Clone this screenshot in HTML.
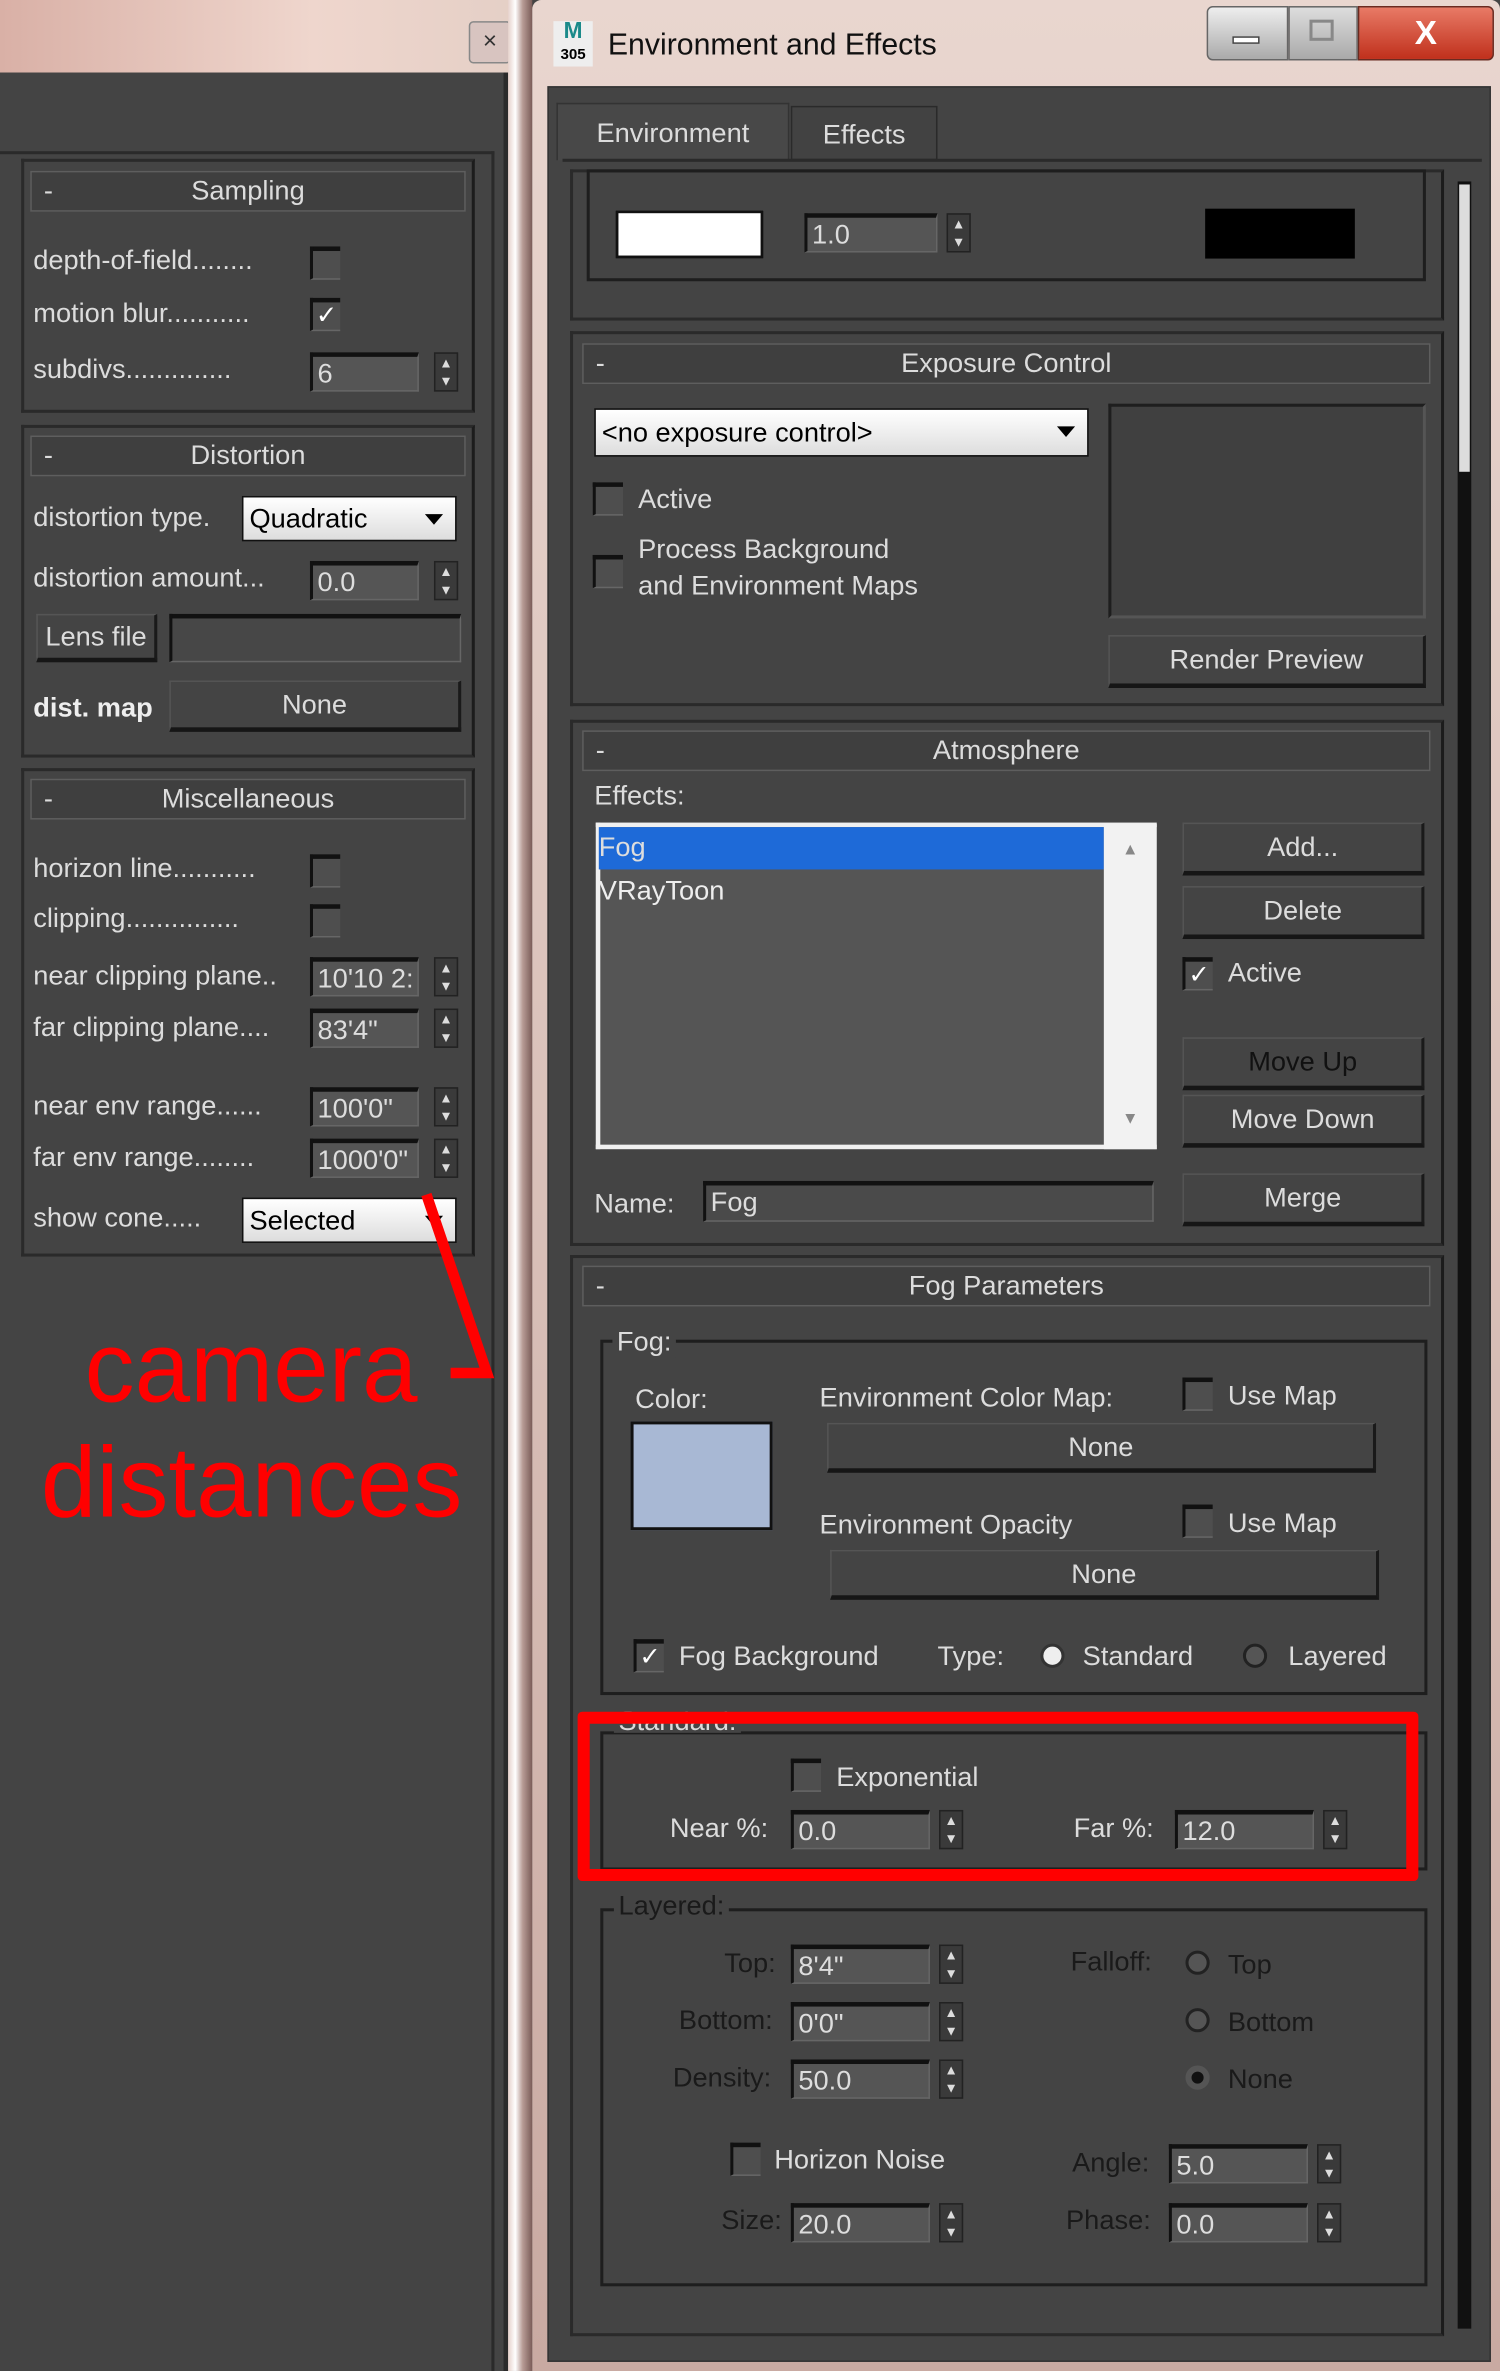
<!DOCTYPE html>
<html><head><meta charset="utf-8"><style>
html,body{margin:0;padding:0;background:#444;width:1500px;height:2371px;overflow:hidden}
#s{position:absolute;left:0;top:0;width:992px;height:1568px;transform:scale(1.5121);transform-origin:0 0;background:#444;font-family:"Liberation Sans",sans-serif;font-size:18px;color:#dcdcdc;overflow:hidden}
#s div{position:absolute;box-sizing:border-box}
.t{line-height:22px;white-space:nowrap}
#s .d{color:#1a1a1a}
.hd{height:27px;border:1px solid #5e5e5e;background:#3f3f3f;text-align:center;line-height:25px}
.hd span{position:absolute;left:8px;top:0}
.fr{border:2px solid #2a2a2a;border-right-color:#1c1c1c}
.grp{border:2px solid #1e1e1e}
.fld{background:#555;border-top:3px solid #111;border-left:2px solid #111;border-bottom:1px solid #666;border-right:1px solid #666;color:#ddd;padding-left:3px;line-height:22px;height:26px}
.sp{width:16px;height:26px;background:#3a3a3a;border:1px solid #222;font-size:9px;line-height:12px;text-align:center;color:#ddd}
.btn{background:#444;border:1px solid #555;border-bottom:3px solid #161616;border-right:2px solid #1a1a1a;text-align:center;line-height:30px}
.cb{width:20px;height:22px;background:#4e4e4e;border-top:3px solid #111;border-left:2px solid #111;border-bottom:1px solid #666;color:#fff;font-size:17px;line-height:18px;text-align:center}
.rd{width:16px;height:16px;border-radius:50%;background:#555;border:2px solid #222}
.dd{background:linear-gradient(#fff,#ddd);border:1px solid #111;color:#000;line-height:28px;padding-left:4px}
.dd:after{content:"";position:absolute;right:8px;top:11px;border:6px solid transparent;border-top:7px solid #000}
</style></head><body><div id="s">
<div style="left:0;top:0;width:345px;height:48px;background:linear-gradient(90deg,#d9b0a6,#efd6cd 60%,#e4cfc6)"></div>
<div style="left:310px;top:14px;width:28px;height:28px;border:1px solid #888;border-radius:3px;background:#d8c4c0;color:#333;text-align:center;line-height:26px;font-size:16px">×</div>
<div style="left:0;top:48px;width:336px;height:1520px;background:#444;border-right:3px solid #2b2b2b"></div>
<div style="left:0;top:100px;width:327px;height:1468px;border-top:2px solid #2a2a2a;border-right:2px solid #2a2a2a"></div>
<div style="left:336px;top:0;width:16px;height:1568px;background:linear-gradient(90deg,#e6d2cc,#fff 30%,#b89c96 60%,#7a5c58)"></div>

<div class="fr" style="left:14px;top:105px;width:300px;height:168px"></div>
<div class="hd" style="left:20px;top:113px;width:288px"><span>-</span>Sampling</div>
<div class="t" style="left:22px;top:161px">depth-of-field........</div><div class="cb" style="left:205px;top:163px"></div>
<div class="t" style="left:22px;top:196px">motion blur...........</div><div class="cb" style="left:205px;top:197px">✓</div>
<div class="t" style="left:22px;top:233px">subdivs..............</div><div class="fld" style="left:205px;top:233px;width:72px">6</div><div class="sp" style="left:287px;top:233px">▲<br>▼</div>

<div class="fr" style="left:14px;top:281px;width:300px;height:220px"></div>
<div class="hd" style="left:20px;top:288px;width:288px"><span>-</span>Distortion</div>
<div class="t" style="left:22px;top:331px">distortion type.</div><div class="dd" style="left:160px;top:328px;width:142px;height:30px">Quadratic</div>
<div class="t" style="left:22px;top:371px">distortion amount...</div><div class="fld" style="left:205px;top:371px;width:72px">0.0</div><div class="sp" style="left:287px;top:371px">▲<br>▼</div>
<div class="btn" style="left:24px;top:406px;width:80px;height:32px;line-height:28px">Lens file</div>
<div class="fld" style="left:112px;top:406px;width:193px;height:32px;background:#474747"></div>
<div class="t" style="left:22px;top:457px;font-weight:bold;color:#eee">dist. map</div>
<div class="btn" style="left:112px;top:450px;width:193px;height:34px">None</div>

<div class="fr" style="left:14px;top:508px;width:300px;height:323px"></div>
<div class="hd" style="left:20px;top:515px;width:288px"><span>-</span>Miscellaneous</div>
<div class="t" style="left:22px;top:563px">horizon line...........</div><div class="cb" style="left:205px;top:565px"></div>
<div class="t" style="left:22px;top:596px">clipping...............</div><div class="cb" style="left:205px;top:598px"></div>
<div class="t" style="left:22px;top:634px">near clipping plane..</div><div class="fld" style="left:205px;top:633px;width:72px;overflow:hidden">10'10 2:</div><div class="sp" style="left:287px;top:633px">▲<br>▼</div>
<div class="t" style="left:22px;top:668px">far clipping plane....</div><div class="fld" style="left:205px;top:667px;width:72px">83'4"</div><div class="sp" style="left:287px;top:667px">▲<br>▼</div>
<div class="t" style="left:22px;top:720px">near env range......</div><div class="fld" style="left:205px;top:719px;width:72px">100'0"</div><div class="sp" style="left:287px;top:719px">▲<br>▼</div>
<div class="t" style="left:22px;top:754px">far env range........</div><div class="fld" style="left:205px;top:753px;width:72px">1000'0"</div><div class="sp" style="left:287px;top:753px">▲<br>▼</div>
<div class="t" style="left:22px;top:794px">show cone.....</div><div class="dd" style="left:160px;top:792px;width:142px;height:30px">Selected</div>

<svg style="position:absolute;left:0;top:0" width="340" height="1000"><polyline points="282,790 322,908 298,908" fill="none" stroke="#f00" stroke-width="7"/></svg>
<div class="t" style="left:56px;top:869px;font-size:66px;line-height:70px;color:#f00">camera</div>
<div class="t" style="left:27px;top:945px;font-size:66px;line-height:70px;color:#f00">distances</div>

<div style="left:352px;top:0;width:640px;height:1568px;background:linear-gradient(#e9d6cf,#c9aaa2);border-radius:6px 6px 0 0"></div>
<div style="left:366px;top:14px;width:26px;height:30px;background:#eee;color:#1a8a8a;font-size:15px;font-weight:bold;line-height:14px;text-align:center">M<br><span style="color:#000;font-size:10px">305</span></div>
<div class="t" style="left:402px;top:19px;font-size:20px;color:#111">Environment and Effects</div>
<div style="left:798px;top:4px;width:54px;height:36px;background:linear-gradient(#eee,#aaa);border:1px solid #666;border-radius:4px 0 0 4px"></div>
<div style="left:815px;top:24px;width:18px;height:5px;background:#fff;border:1px solid #444"></div>
<div style="left:852px;top:4px;width:46px;height:36px;background:linear-gradient(#ddd,#aaa);border:1px solid #666"></div>
<div style="left:866px;top:13px;width:16px;height:14px;border:2px solid #888"></div>
<div style="left:898px;top:4px;width:90px;height:36px;background:linear-gradient(#e87a66,#c0301c);border:1px solid #6a2a20;border-radius:0 4px 4px 0;color:#fff;font-size:22px;font-weight:bold;text-align:center;line-height:34px">X</div>

<div style="left:362px;top:57px;width:624px;height:1505px;background:#444;border:1px solid #333"></div>
<div style="left:368px;top:68px;width:154px;height:38px;background:#484848;border:1px solid #333;border-bottom:none;text-align:center;line-height:38px">Environment</div>
<div style="left:523px;top:70px;width:97px;height:36px;background:#424242;border:1px solid #2a2a2a;text-align:center;line-height:36px">Effects</div>
<div style="left:372px;top:105px;width:608px;height:2px;background:#2a2a2a"></div>
<div style="left:964px;top:120px;width:9px;height:1420px;background:#111"></div>
<div style="left:965px;top:122px;width:7px;height:190px;background:#ddd"></div>

<div class="fr" style="left:377px;top:112px;width:578px;height:100px"></div>
<div class="grp" style="left:388px;top:112px;width:555px;height:74px"></div>
<div style="left:407px;top:139px;width:98px;height:32px;background:#fff;border:2px solid #111"></div>
<div class="fld" style="left:532px;top:141px;width:88px">1.0</div><div class="sp" style="left:626px;top:141px">▲<br>▼</div>
<div style="left:797px;top:138px;width:99px;height:33px;background:#000"></div>

<div class="fr" style="left:377px;top:219px;width:578px;height:248px"></div>
<div class="hd" style="left:385px;top:227px;width:561px"><span>-</span>Exposure Control</div>
<div class="dd" style="left:393px;top:270px;width:327px;height:32px;line-height:30px">&lt;no exposure control&gt;</div>
<div style="left:733px;top:267px;width:210px;height:142px;background:#404040;border:2px solid #1e1e1e;border-right-color:#555;border-bottom-color:#555"></div>
<div class="cb" style="left:392px;top:319px"></div><div class="t" style="left:422px;top:319px">Active</div>
<div class="cb" style="left:392px;top:367px"></div><div class="t" style="left:422px;top:352px">Process Background</div><div class="t" style="left:422px;top:376px">and Environment Maps</div>
<div class="btn" style="left:733px;top:420px;width:210px;height:35px">Render Preview</div>

<div class="fr" style="left:377px;top:476px;width:578px;height:348px"></div>
<div class="hd" style="left:385px;top:483px;width:561px"><span>-</span>Atmosphere</div>
<div class="t" style="left:393px;top:515px">Effects:</div>
<div style="left:394px;top:544px;width:371px;height:216px;background:#555;border:3px solid #f0f0f0;border-right:none"></div>
<div style="left:396px;top:547px;width:334px;height:28px;background:#1e6ad8"></div>
<div class="t" style="left:396px;top:549px;color:#ddd">Fog</div>
<div class="t" style="left:396px;top:578px;color:#eee">VRayToon</div>
<div style="left:730px;top:545px;width:35px;height:215px;background:#f2f2f2;color:#888;font-size:11px;text-align:center;line-height:18px;padding-top:8px">▲<div style="position:static;height:160px"></div>▼</div>
<div class="btn" style="left:782px;top:544px;width:160px;height:35px">Add...</div>
<div class="btn" style="left:782px;top:586px;width:160px;height:35px">Delete</div>
<div class="cb" style="left:782px;top:633px">✓</div><div class="t" style="left:812px;top:632px">Active</div>
<div class="btn" style="left:782px;top:686px;width:160px;height:35px;color:#111">Move Up</div>
<div class="btn" style="left:782px;top:724px;width:160px;height:35px">Move Down</div>
<div class="t" style="left:393px;top:785px">Name:</div>
<div class="fld" style="left:465px;top:781px;width:298px;height:27px;background:#4a4a4a">Fog</div>
<div class="btn" style="left:782px;top:776px;width:160px;height:35px">Merge</div>

<div class="fr" style="left:377px;top:830px;width:578px;height:715px"></div>
<div class="hd" style="left:385px;top:837px;width:561px"><span>-</span>Fog Parameters</div>
<div class="grp" style="left:397px;top:886px;width:547px;height:235px"></div>
<div class="t" style="left:405px;top:876px;background:#444;padding:0 3px">Fog:</div>
<div class="t" style="left:420px;top:914px">Color:</div>
<div style="left:417px;top:940px;width:94px;height:72px;background:#a8b8d4;border:2px solid #111"></div>
<div class="t" style="left:542px;top:913px">Environment Color Map:</div>
<div class="cb" style="left:782px;top:911px"></div><div class="t" style="left:812px;top:912px">Use Map</div>
<div class="btn" style="left:547px;top:941px;width:363px;height:33px">None</div>
<div class="t" style="left:542px;top:997px">Environment Opacity</div>
<div class="cb" style="left:782px;top:995px"></div><div class="t" style="left:812px;top:996px">Use Map</div>
<div class="btn" style="left:549px;top:1025px;width:363px;height:33px">None</div>
<div class="cb" style="left:419px;top:1084px">✓</div><div class="t" style="left:449px;top:1084px">Fog Background</div>
<div class="t" style="left:620px;top:1084px">Type:</div>
<div class="rd" style="left:688px;top:1087px;background:#eee;border-color:#333"></div><div class="t" style="left:716px;top:1084px">Standard</div>
<div class="rd" style="left:822px;top:1087px"></div><div class="t" style="left:852px;top:1084px">Layered</div>

<div class="grp" style="left:397px;top:1145px;width:547px;height:92px"></div>
<div class="t" style="left:406px;top:1132px;background:#444;padding:0 3px;height:14px;overflow:hidden;line-height:12px">Standard:</div>
<div class="cb" style="left:523px;top:1163px"></div><div class="t" style="left:553px;top:1164px">Exponential</div>
<div class="t" style="left:443px;top:1198px">Near %:</div><div class="fld" style="left:523px;top:1197px;width:92px">0.0</div><div class="sp" style="left:621px;top:1197px">▲<br>▼</div>
<div class="t" style="left:710px;top:1198px">Far %:</div><div class="fld" style="left:777px;top:1197px;width:92px">12.0</div><div class="sp" style="left:875px;top:1197px">▲<br>▼</div>
<div style="left:382px;top:1132px;width:556px;height:112px;border:8px solid #f00;border-radius:3px"></div>

<div class="grp" style="left:397px;top:1262px;width:547px;height:250px"></div>
<div class="t d" style="left:406px;top:1249px;background:#444;padding:0 3px">Layered:</div>
<div class="t d" style="left:479px;top:1287px">Top:</div><div class="fld" style="left:523px;top:1286px;width:92px">8'4"</div><div class="sp" style="left:621px;top:1286px">▲<br>▼</div>
<div class="t d" style="left:449px;top:1325px">Bottom:</div><div class="fld" style="left:523px;top:1324px;width:92px">0'0"</div><div class="sp" style="left:621px;top:1324px">▲<br>▼</div>
<div class="t d" style="left:445px;top:1363px">Density:</div><div class="fld" style="left:523px;top:1362px;width:92px">50.0</div><div class="sp" style="left:621px;top:1362px">▲<br>▼</div>
<div class="t d" style="left:708px;top:1286px">Falloff:</div>
<div class="rd" style="left:784px;top:1290px"></div><div class="t d" style="left:812px;top:1288px">Top</div>
<div class="rd" style="left:784px;top:1328px"></div><div class="t d" style="left:812px;top:1326px">Bottom</div>
<div class="rd" style="left:784px;top:1366px;background:#111;border:4px solid #555"></div><div class="t d" style="left:812px;top:1364px">None</div>
<div class="cb" style="left:483px;top:1417px"></div><div class="t" style="left:512px;top:1417px">Horizon Noise</div>
<div class="t d" style="left:709px;top:1419px">Angle:</div><div class="fld" style="left:773px;top:1418px;width:92px">5.0</div><div class="sp" style="left:871px;top:1418px">▲<br>▼</div>
<div class="t d" style="left:477px;top:1457px">Size:</div><div class="fld" style="left:523px;top:1457px;width:92px">20.0</div><div class="sp" style="left:621px;top:1457px">▲<br>▼</div>
<div class="t d" style="left:705px;top:1457px">Phase:</div><div class="fld" style="left:773px;top:1457px;width:92px">0.0</div><div class="sp" style="left:871px;top:1457px">▲<br>▼</div>
</div></body></html>
